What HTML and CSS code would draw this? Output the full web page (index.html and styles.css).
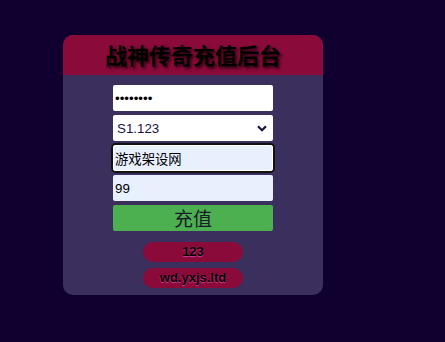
FILE: index.html
```html
<!DOCTYPE html>
<html lang="zh">
<head>
<meta charset="utf-8">
<title>战神传奇充值后台</title>
<link rel="stylesheet" href="styles.css">
</head>
<body>
<div class="card">
  <div class="card-header"><h1 class="title">战神传奇充值后台</h1></div>
  <form class="card-body">
    <input class="field field-white" type="password" value="12345678">
    <div class="select-wrap">
      <select class="field field-white select">
        <option>S1.123</option>
      </select>
      <svg class="chevron" width="10" height="7" viewBox="0 0 10 7"><path d="M1 1.2 L5 5.2 L9 1.2" fill="none" stroke="#1a1440" stroke-width="2.2"/></svg>
    </div>
    <input class="field field-blue field-focus" type="text" value="游戏架设网">
    <input class="field field-blue" type="text" value="99">
    <button class="submit" type="button">充值</button>
    <div class="pills">
      <div class="pill">123</div>
      <div class="pill">wd.yxjs.ltd</div>
    </div>
  </form>
</div>
</body>
</html>
```
FILE: styles.css
```css
html, body {
  margin: 0;
  padding: 0;
}
body {
  background: #0f0030;
  width: 445px;
  height: 342px;
  font-family: "Liberation Sans", Arial, "Noto Sans CJK SC", sans-serif;
  overflow: hidden;
}
.card {
  margin: 35px 0 0 63px;
  width: 260px;
  height: 260px;
  background: #3b2f5e;
  border-radius: 10px;
  overflow: hidden;
  display: flex;
  flex-direction: column;
}
.card-header {
  background: #8a0a3a;
  height: 40px;
  display: flex;
  align-items: center;
  justify-content: center;
}
.title {
  margin: 0;
  font-family: "Noto Sans CJK SC", "Liberation Sans", sans-serif;
  font-size: 22px;
  font-weight: 700;
  color: #000;
  line-height: 1;
  text-shadow: 2px 2px 3px rgba(0, 0, 0, 0.75);
  padding-bottom: 2px;
}
.card-body {
  margin: 0;
  padding: 10px 0 0;
  display: flex;
  flex-direction: column;
  align-items: center;
  gap: 4px;
}
.field {
  box-sizing: border-box;
  width: 160px;
  height: 26px;
  margin: 0;
  border: none;
  border-radius: 2px;
  padding: 0 2px;
  font-family: "Liberation Sans", Arial, "Noto Sans CJK SC", sans-serif;
  font-size: 13.33px;
  color: #000;
  outline: none;
}
.field-white {
  background: #fff;
}
.field-blue {
  background: #e8f0fe;
}
.field-focus {
  box-shadow: inset 0 0 0 1px #fff, 0 0 0 2px #111;
  border-radius: 3px;
}
.select-wrap {
  position: relative;
  width: 160px;
  height: 26px;
}
.select {
  -webkit-appearance: none;
  appearance: none;
  padding: 0 4px;
  color: #1a1440;
}
.chevron {
  position: absolute;
  right: 6px;
  top: 10px;
  pointer-events: none;
}
.submit {
  box-sizing: border-box;
  width: 160px;
  height: 26px;
  margin: 0;
  border: none;
  border-radius: 2px;
  background: #4caf50;
  color: #1a1a2a;
  font-family: "Noto Sans CJK SC", "Liberation Sans", sans-serif;
  font-size: 19px;
  line-height: 26px;
  padding: 0;
}
.pills {
  margin-top: 7px;
  display: flex;
  flex-direction: column;
  align-items: center;
  gap: 6px;
}
.pill {
  width: 100px;
  height: 20px;
  border-radius: 10px;
  background: #8a0a3a;
  color: #000;
  font-size: 13px;
  font-weight: 700;
  line-height: 20px;
  text-align: center;
  text-shadow: 0 1px 1px #d04090;
}
```
